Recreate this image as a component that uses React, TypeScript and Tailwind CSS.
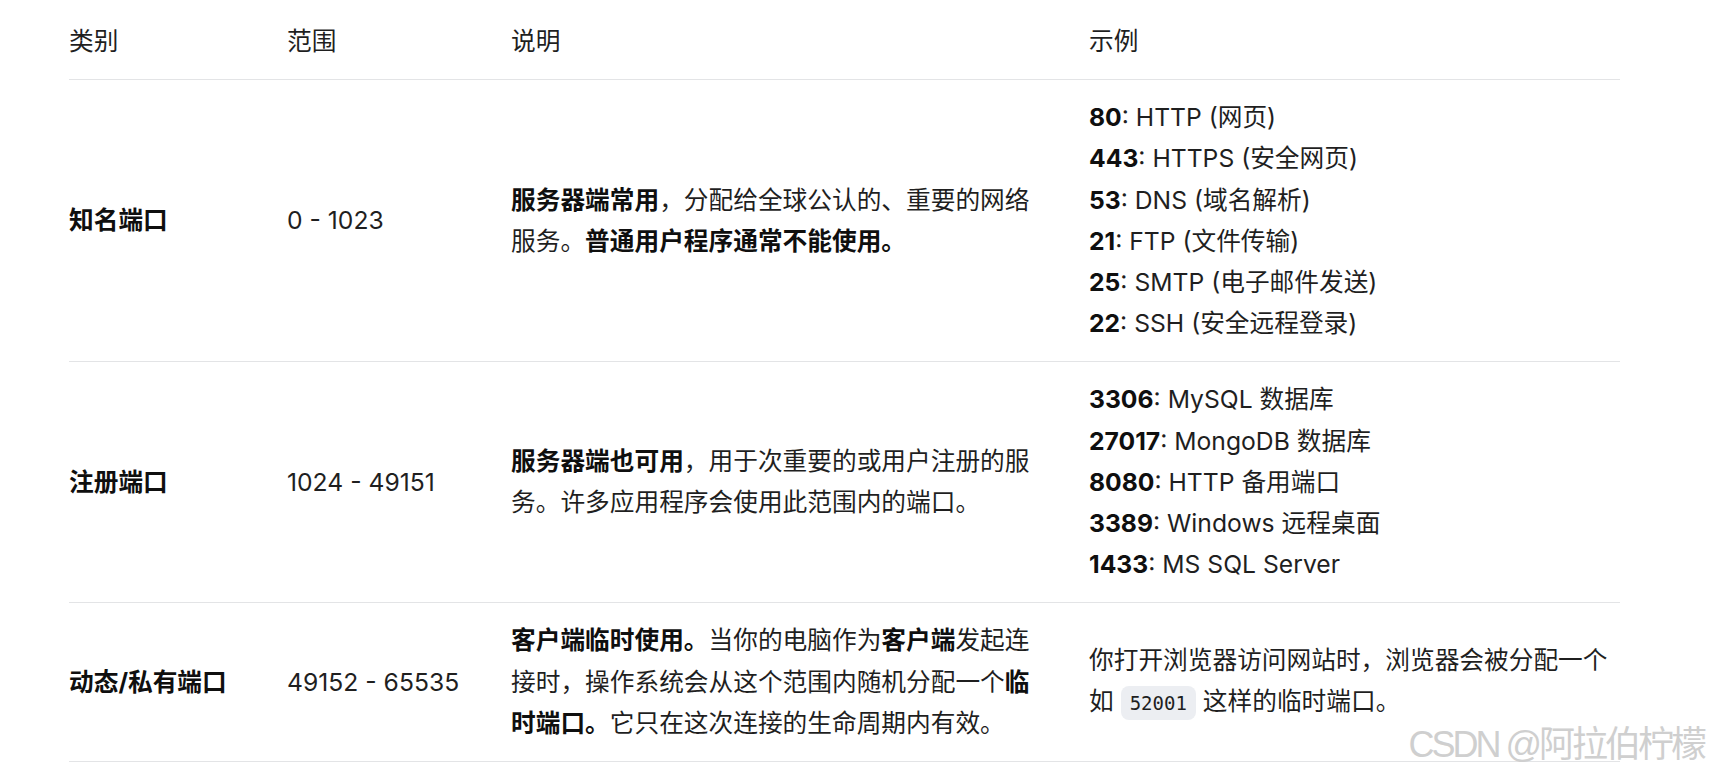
const rows = [
  {
    category: "知名端口",
    range: "0 - 1023",
    desc: (
      <>
        <b className="font-bold text-[#0f0f0f]">服务器端常用</b>，分配给全球公认的、重要的网络服务。
        <b className="font-bold text-[#0f0f0f]">普通用户程序通常不能使用。</b>
      </>
    ),
    examples: [
      ["80", "HTTP (网页)"],
      ["443", "HTTPS (安全网页)"],
      ["53", "DNS (域名解析)"],
      ["21", "FTP (文件传输)"],
      ["25", "SMTP (电子邮件发送)"],
      ["22", "SSH (安全远程登录)"],
    ],
  },
  {
    category: "注册端口",
    range: "1024 - 49151",
    desc: (
      <>
        <b className="font-bold text-[#0f0f0f]">服务器端也可用</b>，用于次重要的或用户注册的服务。许多应用程序会使用此范围内的端口。
      </>
    ),
    examples: [
      ["3306", "MySQL 数据库"],
      ["27017", "MongoDB 数据库"],
      ["8080", "HTTP 备用端口"],
      ["3389", "Windows 远程桌面"],
      ["1433", "MS SQL Server"],
    ],
  },
];

function App() {
  /* ----- RENDER ----- */
  const cell = "py-[17px] align-middle text-left";

  return (
    <main
      className="relative h-[774px] w-[1710px] overflow-hidden bg-white text-[24.7px] leading-[41.2px] text-[#1f1f1f]"
      style={{ fontFamily: 'Inter, "Noto Sans CJK SC", sans-serif' }}
    >
      <div className="pl-[69px]">
        <table className="w-[1551px] table-fixed border-collapse">
          <colgroup>
            <col className="w-[218px]" />
            <col className="w-[224px]" />
            <col className="w-[578px]" />
            <col className="w-[531px]" />
          </colgroup>
          <thead>
            <tr className="border-b border-[#e3e4e6]">
              <th className="pt-[21px] pb-[17px] text-left font-normal">类别</th>
              <th className="pt-[21px] pb-[17px] text-left font-normal">范围</th>
              <th className="pt-[21px] pb-[17px] text-left font-normal">说明</th>
              <th className="pt-[21px] pb-[17px] text-left font-normal">示例</th>
            </tr>
          </thead>
          <tbody>
            {rows.map((row) => (
              <tr key={row.category} className="border-b border-[#e3e4e6]">
                <td className={`${cell} font-bold text-[#0f0f0f]`}>{row.category}</td>
                <td className={cell}>{row.range}</td>
                <td className={`${cell} pr-[48px]`}>{row.desc}</td>
                <td className={cell}>
                  {row.examples.map(([port, text]) => (
                    <div key={port}>
                      <b className="font-bold text-[#0f0f0f]">{port}</b>: {text}
                    </div>
                  ))}
                </td>
              </tr>
            ))}
            {/* dynamic ports */}
            <tr className="border-b border-[#e3e4e6]">
              <td className={`${cell} font-bold text-[#0f0f0f]`}>动态/私有端口</td>
              <td className={cell}>49152 - 65535</td>
              <td className={`${cell} pr-[48px]`}>
                <b className="font-bold text-[#0f0f0f]">客户端临时使用。</b>当你的电脑作为
                <b className="font-bold text-[#0f0f0f]">客户端</b>发起连接时，操作系统会从这个范围内随机分配一个
                <b className="font-bold text-[#0f0f0f]">临时端口。</b>它只在这次连接的生命周期内有效。
              </td>
              <td className={cell}>
                你打开浏览器访问网站时，浏览器会被分配一个如{" "}
                <code
                  className="rounded-lg bg-[#eceef2] px-[9px] py-[6px] text-[19px]"
                  style={{ fontFamily: '"DejaVu Sans Mono", monospace' }}
                >
                  52001
                </code>{" "}
                这样的临时端口。
              </td>
            </tr>
          </tbody>
        </table>
      </div>
      {/* watermark */}
      <div
        className="absolute right-[6px] top-[723px] text-[36px] leading-[44px] tracking-[-3px] text-[#cfcfcf]"
        style={{ fontFamily: '"Liberation Sans", "Noto Sans CJK SC", sans-serif' }}
      >
        CSDN @阿拉伯柠檬
      </div>
    </main>
  );
}

export default App;
